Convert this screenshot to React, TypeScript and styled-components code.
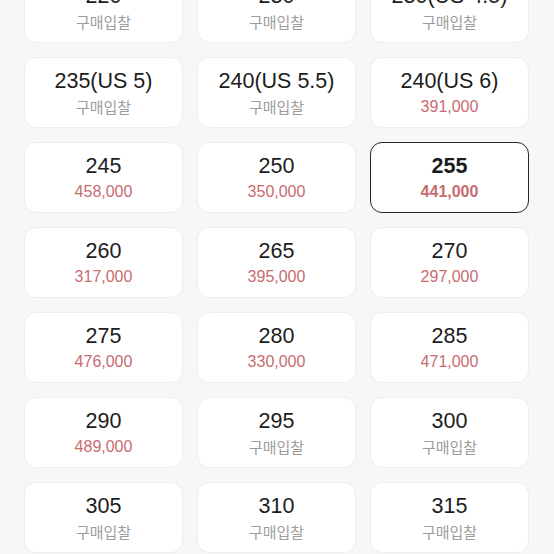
import React from "react";
import styled, { createGlobalStyle } from "styled-components";

const Global = createGlobalStyle`
  html, body { margin: 0; padding: 0; background: #f7f7f7; }
  body { font-family: "Liberation Sans", "Noto Sans CJK KR", sans-serif; }
  #root { height: 554px; overflow: hidden; }
`;

const Grid = styled.div`
  display: grid;
  grid-template-columns: repeat(3, 159px);
  column-gap: 14px;
  row-gap: 14px;
  padding: 0 24px;
  margin-top: -28px;
`;

const Card = styled.button<{ $selected?: boolean }>`
  height: 71px;
  box-sizing: border-box;
  background: #ffffff;
  border: ${(p) => (p.$selected ? "1.5px solid #262626" : "1px solid #ededed")};
  border-radius: 12px;
  display: flex;
  flex-direction: column;
  align-items: center;
  justify-content: center;
  gap: 3px;
  padding: 0;
  font-family: "Liberation Sans", "Noto Sans CJK KR", sans-serif;
`;

const Size = styled.span<{ $selected?: boolean }>`
  font-size: 21.5px;
  line-height: 25px;
  color: #1c1c1c;
  font-weight: ${(p) => (p.$selected ? 700 : 400)};
`;

const Price = styled.span<{ $selected?: boolean; $bid?: boolean }>`
  font-size: ${(p) => (p.$bid ? "15px" : "16px")};
  line-height: 20px;
  color: ${(p) => (p.$bid ? "#9d9d9d" : "#c86b70")};
  font-weight: ${(p) => (p.$selected ? 700 : 400)};
  font-family: ${(p) =>
    p.$bid ? `"Noto Sans CJK KR", sans-serif` : `"Liberation Sans", sans-serif`};
`;

type Item = { size: string; price?: string; selected?: boolean };

const items: Item[] = [
  { size: "220" },
  { size: "230" },
  { size: "230(US 4.5)" },
  { size: "235(US 5)" },
  { size: "240(US 5.5)" },
  { size: "240(US 6)", price: "391,000" },
  { size: "245", price: "458,000" },
  { size: "250", price: "350,000" },
  { size: "255", price: "441,000", selected: true },
  { size: "260", price: "317,000" },
  { size: "265", price: "395,000" },
  { size: "270", price: "297,000" },
  { size: "275", price: "476,000" },
  { size: "280", price: "330,000" },
  { size: "285", price: "471,000" },
  { size: "290", price: "489,000" },
  { size: "295" },
  { size: "300" },
  { size: "305" },
  { size: "310" },
  { size: "315" },
];

export default function App() {
  return (
    <>
      <Global />
      <Grid>
        {items.map((it) => (
          <Card key={it.size} $selected={it.selected}>
            <Size $selected={it.selected}>{it.size}</Size>
            <Price $selected={it.selected} $bid={!it.price}>
              {it.price ?? "구매입찰"}
            </Price>
          </Card>
        ))}
      </Grid>
    </>
  );
}
